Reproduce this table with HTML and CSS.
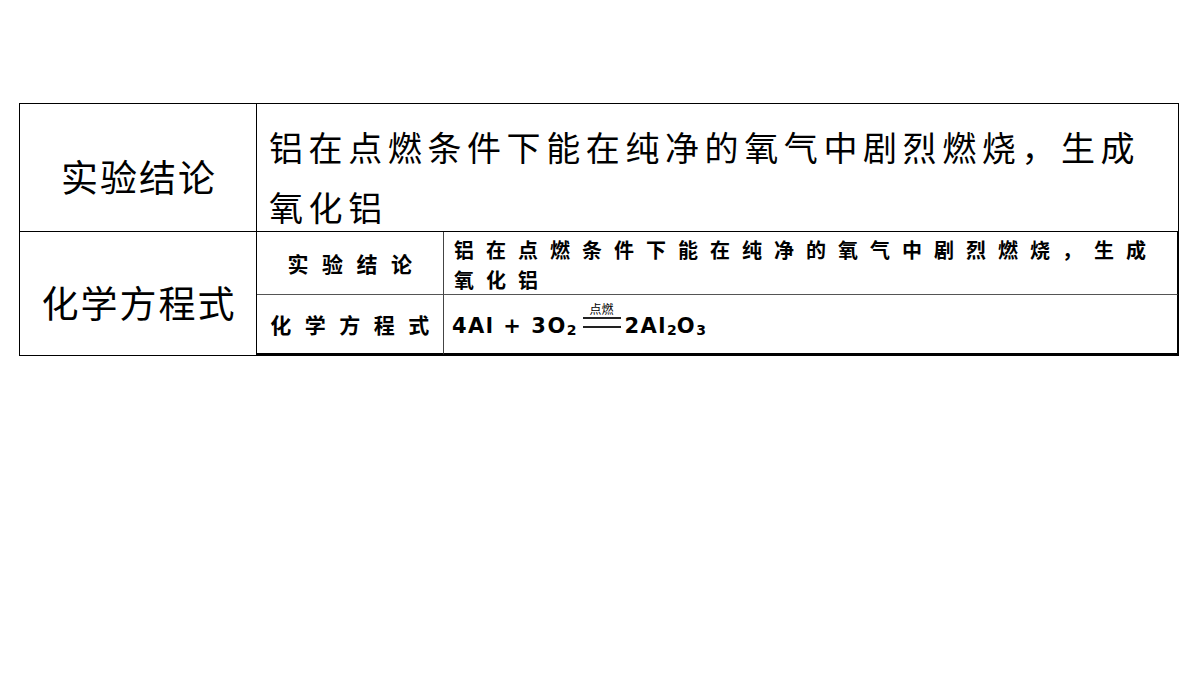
FILE: index.html
```html
<!DOCTYPE html>
<html lang="zh-CN">
<head>
<meta charset="utf-8">
<title>实验结论</title>
<link rel="stylesheet" href="styles.css">
</head>
<body>
<div class="page">
  <div class="outer">
    <div class="cell label">实验结论</div>
    <div class="cell body">铝在点燃条件下能在纯净的氧气中剧烈燃烧，生成<br>氧化铝</div>
    <div class="cell label">化学方程式</div>
    <div class="cell embed">
      <div class="inner">
        <div class="ic il">实验结论</div>
        <div class="ic it">铝在点燃条件下能在纯净的氧气中剧烈燃烧，生成<br>氧化铝</div>
        <div class="ic il last">化学方程式</div>
        <div class="ic formula last">
          <span class="f">4Al + 3O<sub>2</sub></span>
          <span class="cond"><span class="cond-t">点燃</span><span class="eq"></span></span>
          <span class="f">2Al<sub>2</sub>O<sub>3</sub></span>
        </div>
      </div>
    </div>
  </div>
</div>
</body>
</html>
```

FILE: styles.css
```css
html, body {
  margin: 0;
  background: #fff;
}
body {
  font-family: "Noto Sans CJK SC", "Noto Sans", sans-serif;
  color: #000;
}
.page {
  padding: 103px 0 0 19px;
}
.outer {
  box-sizing: border-box;
  width: 1160px;
  display: grid;
  grid-template-columns: 237px 922px;
  grid-template-rows: 128px 124px;
  border-left: 1px solid #000;
  border-top: 1px solid #000;
}
.cell {
  border-right: 1px solid #000;
  border-bottom: 1px solid #000;
  box-sizing: border-box;
  min-width: 0;
}
.label {
  display: flex;
  align-items: center;
  justify-content: center;
  font-size: 37px;
  letter-spacing: 2px;
  padding: 16px 0 0 2px;
  white-space: nowrap;
}
.body {
  font-size: 34px;
  letter-spacing: 5.6px;
  line-height: 60px;
  padding: 13px 0 0 12px;
  white-space: nowrap;
}
.embed {
  display: flex;
}
.inner {
  flex: 1;
  display: grid;
  grid-template-columns: 187px 1fr;
  grid-template-rows: 63px 1fr;
}
.ic {
  box-sizing: border-box;
  border-bottom: 1px solid #555;
  min-width: 0;
}
.ic.last {
  border-bottom: 2px solid #000;
}
.il {
  border-right: 1px solid #444;
  display: flex;
  align-items: center;
  justify-content: center;
  font-weight: 700;
  font-size: 21px;
  letter-spacing: 13.5px;
  padding-left: 13px;
  white-space: nowrap;
}
.it, .formula {
  border-right: 1px solid #000;
}
.it {
  font-size: 20px;
  font-weight: 700;
  letter-spacing: 12px;
  line-height: 30px;
  padding: 3px 0 0 10px;
  white-space: nowrap;
}
.formula {
  display: flex;
  align-items: center;
  padding: 3px 0 0 8px;
  font-family: "DejaVu Sans", "Liberation Sans", sans-serif;
  font-weight: 700;
  font-size: 21px;
  letter-spacing: 1.5px;
  white-space: pre;
}
.f sub {
  font-size: 14px;
  vertical-align: -2px;
  line-height: 0;
  letter-spacing: 0;
}
.cond {
  display: flex;
  flex-direction: column;
  align-items: stretch;
  width: 38px;
  margin: 0 4px 22px 6px;
}
.cond-t {
  display: block;
  font-family: "Noto Sans CJK SC", sans-serif;
  font-weight: 400;
  font-size: 12px;
  line-height: 14px;
  letter-spacing: 0;
  text-align: center;
}
.eq {
  display: block;
  height: 7px;
  border-top: 2px solid #222;
  border-bottom: 2px solid #222;
  margin-top: 1px;
}
```
